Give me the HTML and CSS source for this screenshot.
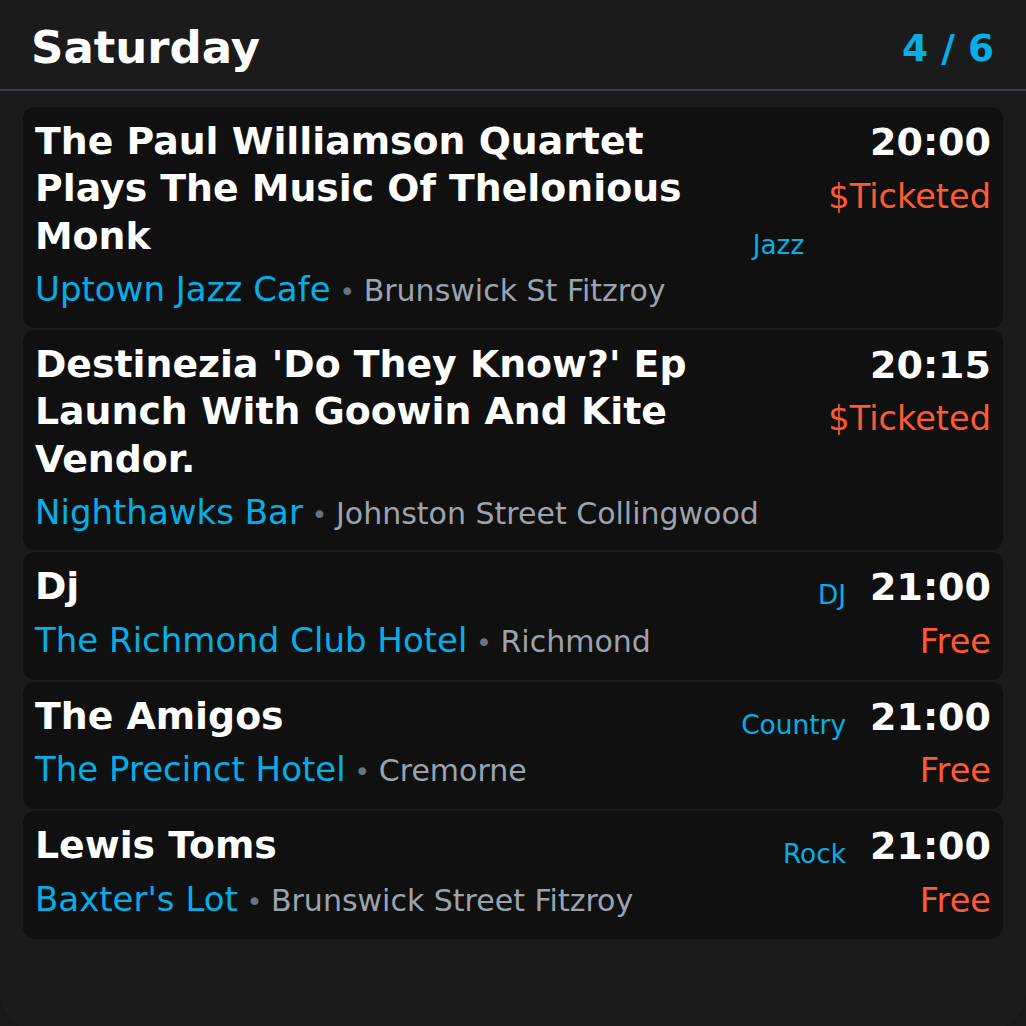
FILE: index.html
```html
<!DOCTYPE html>
<html lang="en">
<head>
<meta charset="utf-8">
<title>Saturday</title>
<link rel="stylesheet" href="styles.css">
</head>
<body>
<div class="screen">
  <header class="header">
    <h1 class="day">Saturday</h1>
    <div class="pager">4 / 6</div>
  </header>
  <main class="list">
    <article class="card">
      <div class="main">
        <div class="title-row">
          <h2 class="title">The Paul Williamson Quartet Plays The Music Of Thelonious Monk</h2>
          <span class="genre">Jazz</span>
        </div>
        <div class="where"><span class="venue">Uptown Jazz Cafe</span><span class="dot"> • </span><span class="place">Brunswick St Fitzroy</span></div>
      </div>
      <div class="side">
        <div class="time">20:00</div>
        <div class="price">$Ticketed</div>
      </div>
    </article>
    <article class="card">
      <div class="main">
        <div class="title-row">
          <h2 class="title">Destinezia 'Do They Know?' Ep Launch With Goowin And Kite Vendor.</h2>
        </div>
        <div class="where"><span class="venue">Nighthawks Bar</span><span class="dot"> • </span><span class="place">Johnston Street Collingwood</span></div>
      </div>
      <div class="side">
        <div class="time">20:15</div>
        <div class="price">$Ticketed</div>
      </div>
    </article>
    <article class="card">
      <div class="main">
        <div class="title-row">
          <h2 class="title">Dj</h2>
          <span class="genre">DJ</span>
        </div>
        <div class="where"><span class="venue">The Richmond Club Hotel</span><span class="dot"> • </span><span class="place">Richmond</span></div>
      </div>
      <div class="side">
        <div class="time">21:00</div>
        <div class="price">Free</div>
      </div>
    </article>
    <article class="card">
      <div class="main">
        <div class="title-row">
          <h2 class="title">The Amigos</h2>
          <span class="genre">Country</span>
        </div>
        <div class="where"><span class="venue">The Precinct Hotel</span><span class="dot"> • </span><span class="place">Cremorne</span></div>
      </div>
      <div class="side">
        <div class="time">21:00</div>
        <div class="price">Free</div>
      </div>
    </article>
    <article class="card">
      <div class="main">
        <div class="title-row">
          <h2 class="title">Lewis Toms</h2>
          <span class="genre">Rock</span>
        </div>
        <div class="where"><span class="venue">Baxter's Lot</span><span class="dot"> • </span><span class="place">Brunswick Street Fitzroy</span></div>
      </div>
      <div class="side">
        <div class="time">21:00</div>
        <div class="price">Free</div>
      </div>
    </article>
  </main>
</div>
</body>
</html>
```

FILE: styles.css
```css
* { box-sizing: border-box; }

html, body {
  margin: 0;
  padding: 0;
  background: #181818;
}

body {
  font-family: "DejaVu Sans", "Liberation Sans", sans-serif;
  color: #ffffff;
}

.screen {
  min-height: 1032px;
  background: #1b1b1b;
  border-radius: 0 0 40px 40px;
}

.header {
  display: flex;
  align-items: center;
  justify-content: space-between;
  padding: 22px 32px 15px 31px;
  border-bottom: 2px solid #363c48;
}

.day {
  margin: 0;
  font-size: 45px;
  font-weight: bold;
  line-height: 52px;
  color: #ffffff;
}

.pager {
  font-size: 37.5px;
  font-weight: bold;
  color: #06aee6;
  line-height: 44px;
}

.list {
  display: flex;
  flex-direction: column;
  gap: 2px;
  padding: 16px 23px 0 23px;
}

.card {
  display: flex;
  gap: 24px;
  background: #101010;
  border-radius: 12px;
  padding: 11px 12px 17px 12px;
}

.main {
  flex: 1;
  min-width: 0;
}

.title-row {
  display: flex;
  align-items: flex-end;
  gap: 24px;
}

.title {
  flex: 1;
  margin: 0;
  font-size: 37.8px;
  font-weight: bold;
  line-height: 47.4px;
  color: #ffffff;
}

.genre {
  flex: none;
  font-size: 26.4px;
  line-height: 1.2;
  color: #06aee6;
}

.where {
  margin-top: 8px;
  font-size: 34px;
  line-height: 1.25;
  white-space: nowrap;
}

.venue {
  color: #06aee6;
}

.dot {
  color: #6b7280;
  font-size: 27px;
  white-space: pre;
}

.place {
  color: #9ca3af;
  font-size: 30px;
}

.side {
  flex: none;
  display: flex;
  flex-direction: column;
  align-items: flex-end;
  padding-top: 1px;
}

.time {
  font-size: 38px;
  font-weight: bold;
  line-height: 1.25;
  color: #ffffff;
}

.price {
  margin-top: 9px;
  font-size: 33.6px;
  line-height: 1.25;
  color: #ff5a36;
}
```
